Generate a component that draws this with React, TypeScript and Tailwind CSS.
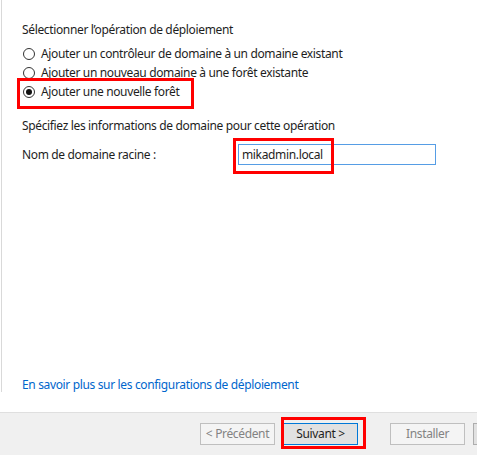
import React from 'react'

function Radio({ checked, label }: { checked?: boolean; label: string }) {
  return (
    <div className="flex items-center h-[16px] pl-[1px]">
      <span className="w-[12px] h-[12px] rounded-full border border-[#333333] bg-white flex items-center justify-center">
        {checked && <span className="w-[6px] h-[6px] rounded-full bg-[#111111]" />}
      </span>
      <span className="ml-[6px]">{label}</span>
    </div>
  )
}

export default function App() {
  return (
    <div
      className="relative w-[477px] h-[455px] overflow-hidden bg-white text-[12px] leading-[16px] tracking-[-0.35px] text-[#1e1e1e]"
      style={{ fontFamily: '"Noto Sans", "Open Sans", sans-serif' }}
    >
      <div className="flex h-[412px]">
        <div className="w-[1px] ml-[1px] h-[392px] bg-[#d9d9d9]" />
        <div className="flex flex-col flex-1 pl-[20px] pt-[22px] pb-[19px]">
          <div>Sélectionner l’opération de déploiement</div>
          <div className="mt-[8px] flex flex-col gap-[3px]">
            <Radio label="Ajouter un contrôleur de domaine à un domaine existant" />
            <Radio label="Ajouter un nouveau domaine à une forêt existante" />
            <Radio checked label="Ajouter une nouvelle forêt" />
          </div>
          <div className="mt-[18px]">Spécifiez les informations de domaine pour cette opération</div>
          <div className="mt-[10px] flex items-center h-[21px]">
            <span className="w-[216px]">Nom de domaine racine :</span>
            <div className="w-[198px] h-[21px] border border-[#569de5] flex items-center pl-[3px]">
              mikadmin.local
            </div>
          </div>
          <div className="flex-1" />
          <a className="text-[#0066cc]">En savoir plus sur les configurations de déploiement</a>
        </div>
      </div>
      <div className="h-[43px] border-t border-[#dfdfdf] bg-[#f0f0f0] flex pl-[200px] pt-[10px] gap-[8px]">
        <div className="w-[75px] h-[22px] shrink-0 border border-[#bfbfbf] bg-[#f4f4f4] text-[#838383] flex items-center justify-center">
          &lt; Précédent
        </div>
        <div className="w-[75px] h-[22px] shrink-0 border border-[#0078d7] bg-[#e1e1e1] flex items-center justify-center">
          Suivant &gt;
        </div>
        <div className="w-[75px] h-[22px] shrink-0 ml-[24px] border border-[#bfbfbf] bg-[#f4f4f4] text-[#838383] flex items-center justify-center">
          Installer
        </div>
        <div className="w-[75px] h-[22px] shrink-0 border border-[#adadad] bg-[#e1e1e1]" />
      </div>

      <div className="absolute left-[17px] top-[78px] w-[177px] h-[31px] border-[3px] border-[#ff0000]" />
      <div className="absolute left-[233px] top-[138px] w-[101px] h-[36px] border-[3px] border-[#ff0000]" />
      <div className="absolute left-[281px] top-[417px] w-[85px] h-[32px] border-[3px] border-[#ff0000]" />
    </div>
  )
}
